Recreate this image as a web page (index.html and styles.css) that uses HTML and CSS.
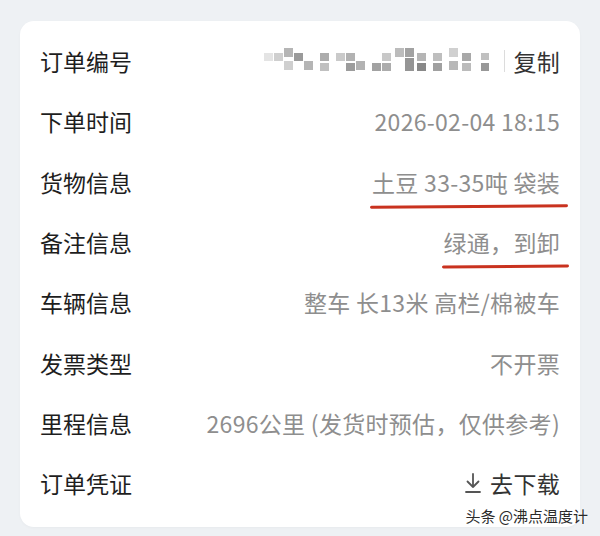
FILE: index.html
```html
<!DOCTYPE html>
<html lang="zh-CN">
<head>
    <meta charset="UTF-8">
    <meta name="viewport" content="width=device-width, initial-scale=1.0">
    <title>订单详情</title>
    <link rel="stylesheet" href="styles.css">
</head>
<body>
    <div class="order-card">
        <div class="order-row">
            <span class="label">订单编号</span>
            <span class="value value-dark">
                <svg class="mosaic" width="232" height="28" viewBox="0 0 232 28">
                    <rect x="0" y="6" width="9" height="8" fill="#e4e4e4"/>
                    <rect x="10" y="6" width="9" height="8" fill="#cfcfcf"/>
                    <rect x="20" y="1" width="9" height="9" fill="#b5b5b5"/>
                    <rect x="20" y="14" width="9" height="9" fill="#cfcfcf"/>
                    <rect x="30" y="6" width="9" height="8" fill="#9a9a9a"/>
                    <rect x="40" y="14" width="9" height="9" fill="#b5b5b5"/>
                    <rect x="56" y="6" width="9" height="8" fill="#acacac"/>
                    <rect x="56" y="16" width="9" height="8" fill="#c0c0c0"/>
                    <rect x="72" y="6" width="9" height="8" fill="#cacaca"/>
                    <rect x="82" y="6" width="9" height="8" fill="#b2b2b2"/>
                    <rect x="82" y="16" width="9" height="8" fill="#9c9c9c"/>
                    <rect x="92" y="14" width="9" height="9" fill="#b2b2b2"/>
                    <rect x="108" y="16" width="9" height="8" fill="#a2a2a2"/>
                    <rect x="118" y="6" width="9" height="8" fill="#c8c8c8"/>
                    <rect x="118" y="16" width="9" height="8" fill="#acacac"/>
                    <rect x="131" y="1" width="9" height="9" fill="#bcbcbc"/>
                    <rect x="141" y="1" width="9" height="9" fill="#a2a2a2"/>
                    <rect x="141" y="11" width="9" height="13" fill="#959595"/>
                    <rect x="153" y="6" width="9" height="8" fill="#b5b5b5"/>
                    <rect x="153" y="16" width="9" height="8" fill="#888888"/>
                    <rect x="169" y="6" width="9" height="8" fill="#bebebe"/>
                    <rect x="169" y="16" width="9" height="8" fill="#a0a0a0"/>
                    <rect x="185" y="1" width="9" height="9" fill="#d0d0d0"/>
                    <rect x="185" y="14" width="9" height="9" fill="#b8b8b8"/>
                    <rect x="198" y="6" width="9" height="8" fill="#a8a8a8"/>
                    <rect x="198" y="16" width="9" height="8" fill="#bbbbbb"/>
                    <rect x="217" y="6" width="8" height="7" fill="#c0c0c0"/>
                    <rect x="217" y="16" width="8" height="8" fill="#989898"/>
                </svg>
                <span class="divider"></span>
                复制
            </span>
        </div>
        <div class="order-row">
            <span class="label">下单时间</span>
            <span class="value">2026-02-04 18:15</span>
        </div>
        <div class="order-row">
            <span class="label">货物信息</span>
            <span class="value marked">土豆 33-35吨 袋装</span>
        </div>
        <div class="order-row">
            <span class="label">备注信息</span>
            <span class="value marked">绿通，到卸</span>
        </div>
        <div class="order-row">
            <span class="label">车辆信息</span>
            <span class="value">整车 长13米 高栏/棉被车</span>
        </div>
        <div class="order-row">
            <span class="label">发票类型</span>
            <span class="value">不开票</span>
        </div>
        <div class="order-row">
            <span class="label">里程信息</span>
            <span class="value">2696公里 (发货时预估，仅供参考)</span>
        </div>
        <div class="order-row">
            <span class="label">订单凭证</span>
            <span class="value value-dark">
                <svg class="download-icon" width="18" height="24" viewBox="0 0 18 24">
                    <path d="M9 3 V16 M3.5 10.5 L9 16 L14.5 10.5 M2 21 H16" fill="none" stroke="#555" stroke-width="1.8" stroke-linecap="round" stroke-linejoin="round"/>
                </svg>
                去下载
            </span>
        </div>
    </div>
    <div class="watermark">头条 @沸点温度计</div>
</body>
</html>
```

FILE: styles.css
```css
body {
    margin: 0;
    padding: 21px 20px 9px;
    background-color: #eef1f4;
    font-family: 'Noto Sans CJK SC', 'Noto Sans', sans-serif;
    position: relative;
    height: 506px;
}
.order-card {
    background-color: #ffffff;
    border-radius: 14px;
    padding: 10px 20px 14px;
    box-shadow: 0 1px 3px rgba(0, 0, 0, 0.03);
}
.order-row {
    display: flex;
    justify-content: space-between;
    align-items: center;
    height: 60.3px;
}
.label {
    font-size: 23px;
    color: #1e1e1e;
}
.value {
    font-size: 23px;
    letter-spacing: 0.3px;
    color: #8e8e8e;
    display: flex;
    align-items: center;
    position: relative;
}
.value-dark {
    color: #333333;
}
.mosaic {
    margin-right: 8px;
}
.divider {
    width: 1px;
    height: 22px;
    background-color: #dcdcdc;
    margin-right: 8px;
}
.marked::after {
    content: '';
    position: absolute;
    left: -2px;
    right: -8px;
    bottom: -9px;
    height: 3px;
    border-radius: 2px;
    background-color: #c9321f;
    transform: rotate(-0.4deg);
}
.download-icon {
    margin-right: 8px;
}
.watermark {
    position: absolute;
    right: 12px;
    bottom: 10px;
    font-size: 15px;
    color: #2b2b2b;
    text-shadow: 0 0 2px #ffffff, 0 0 3px #ffffff;
}
```
